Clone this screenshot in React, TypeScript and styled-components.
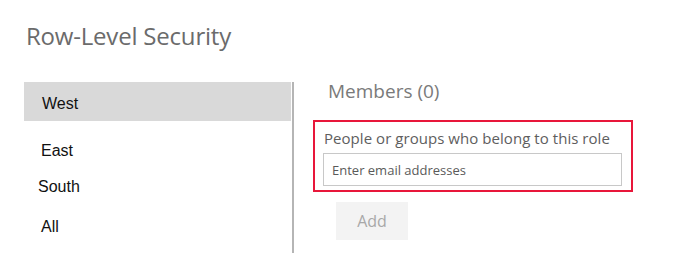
import React from "react";
import styled, { createGlobalStyle } from "styled-components";

const GlobalStyle = createGlobalStyle`
  html, body {
    margin: 0;
    padding: 0;
    background: #ffffff;
  }
`;

const roles = [
  { name: "West", indent: 18 },
  { name: "East", indent: 17 },
  { name: "South", indent: 14 },
  { name: "All", indent: 17 },
];

export default function App() {
  return (
    <>
      <GlobalStyle />
      <Page>
        <Title>Row-Level Security</Title>
        <Body>
          <RoleList>
            {roles.map((role, i) => (
              <RoleItem key={role.name} $selected={i === 0} $indent={role.indent}>
                {role.name}
              </RoleItem>
            ))}
          </RoleList>
          <Divider />
          <Members>
            <MembersTitle>Members (0)</MembersTitle>
            <Highlight>
              <FieldLabel>People or groups who belong to this role</FieldLabel>
              <EmailInput placeholder="Enter email addresses" />
            </Highlight>
            <AddButton disabled>Add</AddButton>
          </Members>
        </Body>
      </Page>
    </>
  );
}

const Page = styled.div`
  width: 684px;
  height: 280px;
  box-sizing: border-box;
  padding: 21px 0 0 24px;
  font-family: "Open Sans", "Noto Sans", sans-serif;
`;

const Title = styled.h1`
  margin: 0 0 0 2px;
  font-size: 24px;
  font-weight: 400;
  color: #6b6b6b;
  line-height: 30px;
  letter-spacing: -0.2px;
`;

const Body = styled.div`
  display: flex;
  margin-top: 31px;
`;

const RoleList = styled.ul`
  list-style: none;
  margin: 0;
  padding: 0;
  width: 267px;
  font-family: "Liberation Sans", Arial, sans-serif;
  font-size: 16px;
  color: #111;
`;

const RoleItem = styled.li<{ $selected: boolean; $indent: number }>`
  height: ${(p) => (p.$selected ? "39px" : "36px")};
  line-height: ${(p) => (p.$selected ? "43px" : "38px")};
  padding-left: ${(p) => p.$indent}px;
  background: ${(p) => (p.$selected ? "#d9d9d9" : "transparent")};
  margin-bottom: ${(p) => (p.$selected ? "11px" : "0")};
  &:last-child {
    margin-top: 4px;
  }
`;

const Divider = styled.div`
  width: 2px;
  height: 171px;
  margin-left: 1px;
  background: #b5b5b5;
`;

const Members = styled.div`
  display: flex;
  flex-direction: column;
  align-items: flex-start;
  padding-left: 19px;
`;

const MembersTitle = styled.div`
  margin: -3px 0 0 15px;
  font-size: 19px;
  color: #7a7a7a;
  line-height: 24px;
`;

const Highlight = styled.div`
  margin-top: 17px;
  width: 320px;
  height: 72px;
  box-sizing: border-box;
  border: 2px solid #e8173a;
  padding: 5px 10px 0 8px;
`;

const FieldLabel = styled.div`
  font-size: 15px;
  color: #5e5e5e;
  line-height: 22px;
  letter-spacing: 0.05px;
  margin-left: 1px;
`;

const EmailInput = styled.input`
  display: block;
  margin-top: 4px;
  width: 299px;
  height: 33px;
  box-sizing: border-box;
  border: 1px solid #c8c8c8;
  padding: 0 8px;
  font-family: "Open Sans", "Noto Sans", sans-serif;
  font-size: 13px;
  outline: none;
  &::placeholder {
    color: #5a5a5a;
  }
`;

const AddButton = styled.button`
  margin: 10px 0 0 23px;
  width: 72px;
  height: 38px;
  border: none;
  background: #f3f3f3;
  color: #a8a8a8;
  font-family: "Open Sans", "Noto Sans", sans-serif;
  font-size: 16px;
`;
